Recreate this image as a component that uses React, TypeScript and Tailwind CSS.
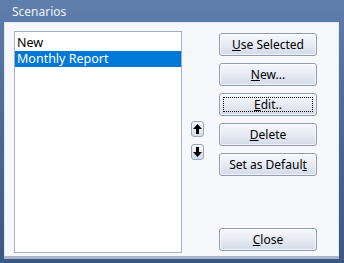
import React from 'react';

const font = { fontFamily: '"Noto Sans", "Open Sans", sans-serif' };

const Btn: React.FC<{ children: React.ReactNode; focused?: boolean; className?: string }> = ({ children, focused, className }) => (
    <button
        className={
            'relative w-[98px] h-[23px] rounded-[3px] border border-[#8e9db6] bg-gradient-to-b from-[#f7f9fc] via-[#e6ebf3] to-[#d3dbe8] text-[12px] leading-none text-black flex items-center justify-center shadow-[inset_0_0_0_1px_rgba(255,255,255,0.7)] ' +
            (className || '')
        }
    >
        {focused && <span className="absolute inset-[3px] border border-dotted border-black" />}
        <span className="relative">{children}</span>
    </button>
);

const ArrowBtn: React.FC<{ down?: boolean }> = ({ down }) => (
    <div className="w-[13px] h-[16px] rounded-[3px] border border-[#9aa8bf] bg-gradient-to-b from-[#f7f9fc] to-[#d5dce8] flex items-center justify-center">
        <svg width="9" height="10" viewBox="0 0 9 10" className={down ? 'rotate-180' : ''}>
            <path d="M4.5 0 L9 5 L6 5 L6 10 L3 10 L3 5 L0 5 Z" fill="#000" />
        </svg>
    </div>
);

export default function App() {
    return (
        <div className="w-[344px] h-[263px] flex flex-col bg-gradient-to-b from-[#5f7eac] via-[#4a6895] to-[#3b5885]" style={font}>
            {/* Title bar */}
            <div className="h-[22px] flex items-center pl-[12px] pt-[1px] text-[12px] text-[#eef3fa]">
                Scenarios
            </div>

            {/* Body */}
            <div className="flex-1 ml-[4px] mr-[5px] mb-[4px] border-b-[3px] border-[#a9b6c9]">
                <div className="h-full bg-[#f6f8fb] border-l border-t border-r border-[#dfe6f0] pl-[9px] pt-[8px] flex">
                    {/* List */}
                    <div className="w-[168px] h-[222px] bg-white border border-[#a3b1c7] pt-[3px] text-[12.5px]">
                        <div className="h-[16px] flex items-center pl-[2px] text-black">New</div>
                        <div className="h-[16px] flex items-center pl-[2px] bg-[#0078d7] text-white">Monthly Report</div>
                    </div>

                    {/* Move arrows */}
                    <div className="ml-[9px] pt-[90px] flex flex-col gap-[7px]">
                        <ArrowBtn />
                        <ArrowBtn down />
                    </div>

                    {/* Buttons */}
                    <div className="ml-[15px] pt-[2px] flex flex-col gap-[7px]">
                        <Btn><span className="underline">U</span>se Selected</Btn>
                        <Btn><span className="underline">N</span>ew...</Btn>
                        <Btn focused><span className="underline">E</span>dit..</Btn>
                        <Btn><span className="underline">D</span>elete</Btn>
                        <Btn>Set as Defaul<span className="underline">t</span></Btn>
                        <Btn className="mt-[45px]"><span className="underline">C</span>lose</Btn>
                    </div>
                </div>
            </div>
        </div>
    );
}
